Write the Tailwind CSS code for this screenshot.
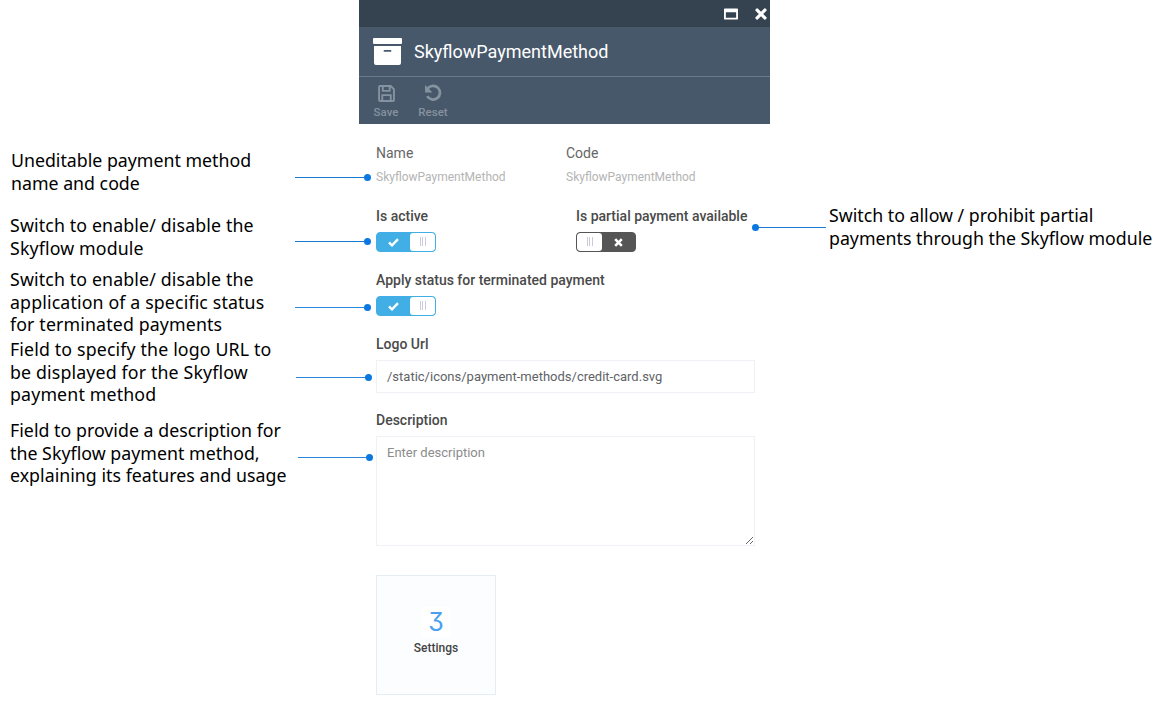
<!DOCTYPE html>
<html lang="en">
<head>
  <meta charset="UTF-8" />
  <meta name="viewport" content="width=device-width, initial-scale=1.0" />
  <title>SkyflowPaymentMethod</title>
  <script src="https://cdn.jsdelivr.net/npm/@tailwindcss/browser@4"></script>
</head>
<body class="bg-white font-['Roboto',sans-serif]">
<div class="relative w-[1167px] h-[708px] overflow-hidden bg-white">

  <!-- Window -->
  <div class="ml-[359px] w-[411px]">
    <div class="h-[27px] bg-[#354350] flex items-center justify-end gap-[17px] pr-[3px]">
      <svg class="w-[14px] h-[12px]" viewBox="0 0 15 12"><path fill="#fff" fill-rule="evenodd" d="M1 0h13a1 1 0 0 1 1 1v10a1 1 0 0 1-1 1H1a1 1 0 0 1-1-1V1a1 1 0 0 1 1-1zm1 4v6h11V4z"/></svg>
      <svg class="w-[12px] h-[12px]" viewBox="0 0 13 13"><path fill="#fff" d="M3 .6 6.500 4.100 10 .6a1 1 0 0 1 1.400 0l1 1a1 1 0 0 1 0 1.400L8.900 6.500l3.500 3.500a1 1 0 0 1 0 1.400l-1 1a1 1 0 0 1-1.400 0L6.500 8.900 3 12.400a1 1 0 0 1-1.400 0l-1-1a1 1 0 0 1 0-1.400l3.500-3.500L.6 3a1 1 0 0 1 0-1.400l1-1A1 1 0 0 1 3 .6z"/></svg>
    </div>
    <div class="h-[49px] bg-[#47586b] flex items-center pl-[14px] border-b border-[#6b7b8c] box-content">
      <svg class="w-[29px] h-[27px]" viewBox="0 0 29 27"><path fill="#fff" fill-rule="evenodd" d="M1 0h27a1 1 0 0 1 1 1v4a1 1 0 0 1-1 1H1a1 1 0 0 1-1-1V1a1 1 0 0 1 1-1zm0 8h27v17a2 2 0 0 1-2 2H3a2 2 0 0 1-2-2zm10.500 4a.8.8 0 0 0 0 1.800h6a.8.8 0 0 0 0-1.800z"/></svg>
      <span class="ml-[12px] text-[18px] text-white">SkyflowPaymentMethod</span>
    </div>
    <div class="h-[47px] bg-[#47586b] flex pl-[13px] gap-[17px] text-[11.500px] font-medium text-[#85929f]">
      <div class="w-[28px] flex flex-col items-center pt-[8px]">
        <svg class="w-[17px] h-[17px]" viewBox="0 0 16 16"><path fill="none" stroke="#85929f" stroke-width="1.800" d="M2 1h10l3 3v10a1 1 0 0 1-1 1H2a1 1 0 0 1-1-1V2a1 1 0 0 1 1-1zM4.500 1.500v4h6.500v-4M4 14.500V9.500h8v5"/></svg>
        <span class="mt-[3px] leading-[14px]">Save</span>
      </div>
      <div class="w-[32px] flex flex-col items-center pt-[7px]">
        <svg class="w-[18px] h-[18px]" viewBox="0 0 17 17"><path fill="none" stroke="#85929f" stroke-width="2.600" d="M3.500 4.200A6.500 6.500 0 1 1 3 11.500"/><path fill="#85929f" d="M1 1v7h7z"/></svg>
        <span class="mt-[3px] leading-[14px]">Reset</span>
      </div>
    </div>

    <!-- Form -->
    <div class="pl-[17px] pr-[15px]">
      <div class="flex mt-[21px]">
        <div class="w-[190px]">
          <div class="text-[14px] leading-[17px] text-[#666]">Name</div>
          <div class="mt-[7px] text-[12px] leading-[17px] text-[#b4b4b4]">SkyflowPaymentMethod</div>
        </div>
        <div>
          <div class="text-[14px] leading-[17px] text-[#666]">Code</div>
          <div class="mt-[7px] text-[12px] leading-[17px] text-[#b4b4b4]">SkyflowPaymentMethod</div>
        </div>
      </div>

      <div class="flex mt-[22px]">
        <div class="w-[200px]">
          <div class="text-[14px] leading-[17px] font-medium text-[#4a4a4a]">Is active</div>
          <div class="mt-[7px] w-[60px] h-[20px] rounded-[4px] border border-[#41afe5] bg-[#41afe5] flex overflow-hidden">
            <div class="w-[33px] flex items-center justify-center">
              <svg class="w-[11px] h-[9px]" viewBox="0 0 11 9"><path fill="none" stroke="#fff" stroke-width="2.400" d="M1 4.500 4 7.300 10 1.200"/></svg>
            </div>
            <div class="flex-1 bg-white rounded-[3px] flex items-center justify-center gap-[1.500px] pb-[2px]">
              <span class="w-[1px] h-[9px] bg-[#c9cbdb]"></span><span class="w-[1px] h-[9px] bg-[#c9cbdb]"></span><span class="w-[1px] h-[9px] bg-[#c9cbdb]"></span>
            </div>
          </div>
        </div>
        <div>
          <div class="text-[14px] leading-[17px] font-medium text-[#4a4a4a]">Is partial payment available</div>
          <div class="mt-[7px] w-[60px] h-[20px] rounded-[4px] border border-[#555] bg-[#555] flex overflow-hidden">
            <div class="w-[25px] bg-white rounded-[3px] flex items-center justify-center gap-[1.500px] pb-[2px]">
              <span class="w-[1px] h-[9px] bg-[#c9cbdb]"></span><span class="w-[1px] h-[9px] bg-[#c9cbdb]"></span><span class="w-[1px] h-[9px] bg-[#c9cbdb]"></span>
            </div>
            <div class="flex-1 flex items-center justify-center">
              <svg class="w-[9px] h-[9px]" viewBox="0 0 9 9"><path fill="none" stroke="#fff" stroke-width="2.600" d="M1.200 1.200l6.600 6.600M7.800 1.200 1.200 7.800"/></svg>
            </div>
          </div>
        </div>
      </div>

      <div class="mt-[20px] text-[14px] leading-[17px] font-medium text-[#4a4a4a]">Apply status for terminated payment</div>
      <div class="mt-[7px] w-[60px] h-[20px] rounded-[4px] border border-[#41afe5] bg-[#41afe5] flex overflow-hidden">
        <div class="w-[33px] flex items-center justify-center">
          <svg class="w-[11px] h-[9px]" viewBox="0 0 11 9"><path fill="none" stroke="#fff" stroke-width="2.400" d="M1 4.500 4 7.300 10 1.200"/></svg>
        </div>
        <div class="flex-1 bg-white rounded-[3px] flex items-center justify-center gap-[1.500px] pb-[2px]">
          <span class="w-[1px] h-[9px] bg-[#c9cbdb]"></span><span class="w-[1px] h-[9px] bg-[#c9cbdb]"></span><span class="w-[1px] h-[9px] bg-[#c9cbdb]"></span>
        </div>
      </div>

      <div class="mt-[20px] text-[14px] leading-[17px] font-medium text-[#4a4a4a]">Logo Url</div>
      <input class="mt-[7px] block w-[379px] h-[33px] border border-[#eef1f6] px-[10px] text-[13px] text-[#606266] outline-none" value="/static/icons/payment-methods/credit-card.svg" />

      <div class="mt-[19px] text-[14px] leading-[17px] font-medium text-[#4a4a4a]">Description</div>
      <textarea class="mt-[7px] block w-[379px] h-[110px] border border-[#eef1f6] px-[10px] py-[7px] text-[13px] leading-[18px] text-[#606266] placeholder:text-[#8c8c8c] outline-none" placeholder="Enter description"></textarea>

      <div class="mt-[29px] w-[120px] h-[120px] border border-[#e4ecf4] bg-[#fbfdff] flex flex-col items-center pt-[31px]">
        <div class="w-[30px] h-[30px] bg-white flex items-center justify-center text-[25px] leading-[30px] text-[#4a9ff0] font-['Inter',sans-serif] [font-feature-settings:'cv09']">3</div>
        <div class="mt-[3px] text-[12px] leading-[17px] font-medium text-[#444]">Settings</div>
      </div>
    </div>
  </div>

  <!-- Callouts -->
  <div class="absolute left-[11px] top-[149px] w-[280px] font-['Noto_Sans',sans-serif] text-[17.750px] leading-[22.500px] text-black">Uneditable payment method<br />name and code</div>
  <div class="absolute left-[10px] top-[214px] w-[280px] font-['Noto_Sans',sans-serif] text-[17.750px] leading-[22.500px] tracking-[0.14px] text-black">Switch to enable/ disable the<br />Skyflow module</div>
  <div class="absolute left-[10px] top-[268px] w-[280px] font-['Noto_Sans',sans-serif] text-[17.750px] leading-[22.500px] tracking-[0.14px] text-black">Switch to enable/ disable the<br />application of a specific status<br />for terminated payments</div>
  <div class="absolute left-[10px] top-[338px] w-[285px] font-['Noto_Sans',sans-serif] text-[17.750px] leading-[22.500px] tracking-[0.15px] text-black">Field to specify the logo URL to<br />be displayed for the Skyflow<br />payment method</div>
  <div class="absolute left-[10px] top-[419px] w-[285px] font-['Noto_Sans',sans-serif] text-[17.750px] leading-[22.500px] tracking-[0.03px] text-black">Field to provide a description for<br />the Skyflow payment method,<br />explaining its features and usage</div>
  <div class="absolute left-[829px] top-[204px] w-[335px] font-['Noto_Sans',sans-serif] text-[17.750px] leading-[22.500px] text-black">Switch to allow / prohibit partial<br />payments through the Skyflow module</div>

  <!-- Leader lines -->
  <div class="absolute left-[295px] top-[177px] w-[72px] h-[1px] bg-[#1a78d0]"></div>
  <div class="absolute left-[364px] top-[174px] w-[7px] h-[7px] rounded-full bg-[#0a78e0]"></div>
  <div class="absolute left-[295px] top-[241px] w-[72px] h-[1px] bg-[#1a78d0]"></div>
  <div class="absolute left-[364px] top-[238px] w-[7px] h-[7px] rounded-full bg-[#0a78e0]"></div>
  <div class="absolute left-[295px] top-[307px] w-[72px] h-[1px] bg-[#2a86dc]"></div>
  <div class="absolute left-[364px] top-[304px] w-[7px] h-[7px] rounded-full bg-[#0a78e0]"></div>
  <div class="absolute left-[296px] top-[377px] w-[72px] h-[1px] bg-[#2a86dc]"></div>
  <div class="absolute left-[365px] top-[374px] w-[7px] h-[7px] rounded-full bg-[#0a78e0]"></div>
  <div class="absolute left-[298px] top-[457px] w-[72px] h-[1px] bg-[#2a86dc]"></div>
  <div class="absolute left-[366px] top-[454px] w-[7px] h-[7px] rounded-full bg-[#0a78e0]"></div>
  <div class="absolute left-[756px] top-[227px] w-[70px] h-[1px] bg-[#1a78d0]"></div>
  <div class="absolute left-[752px] top-[224px] w-[7px] h-[7px] rounded-full bg-[#0a78e0]"></div>
</div>
</body>
</html>
